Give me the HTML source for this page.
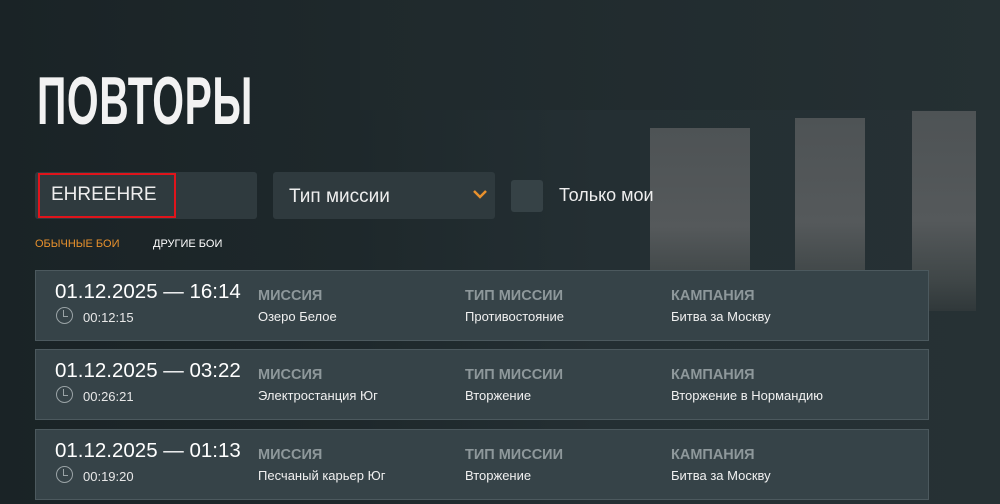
<!DOCTYPE html>
<html><head><meta charset="utf-8"><style>
*{margin:0;padding:0;box-sizing:border-box}
body{width:1000px;height:504px;overflow:hidden;background:#1d2629;font-family:"Liberation Sans",sans-serif;position:relative;color:#fff}
.bg{position:absolute;inset:0;background:linear-gradient(90deg,#1a2326 0%,#1e282b 35%,#242f33 60%,#263134 100%)}
.sky{position:absolute;background:linear-gradient(180deg,#4e5355,#55595b 55%,#3f4647 85%,#30383a);}
.col{position:absolute;background:#222c2f}
h1{position:absolute;left:37px;top:62px;font-size:68px;font-weight:bold;transform:scaleX(0.6);transform-origin:left top;letter-spacing:1px;color:#f2f2f2}
.inp{position:absolute;top:172px;height:47px;background:#2f3a3e;border-radius:3px}
.lbl{position:absolute;font-size:19px;color:#eee}
.card{position:absolute;left:35px;width:894px;height:71px;background:#364348;border:1px solid #4c595e}
.dt{position:absolute;left:19px;top:9px;font-size:20.5px;color:#fff}
.dur{position:absolute;left:47px;top:39px;font-size:13px;color:#e8e8e8}
.clk{position:absolute;left:20px;top:36px;width:17px;height:17px;border:1.5px solid #9aa3a6;border-radius:50%}
.clk:after{content:"";position:absolute;left:6px;top:2px;width:4px;height:6px;border-left:1.5px solid #9aa3a6;border-bottom:1.5px solid #9aa3a6}
.h{position:absolute;top:17px;font-size:14.5px;color:#8e989b;font-weight:bold}
.v{position:absolute;top:38px;font-size:13px;color:#f0f0f0}
</style></head><body>
<div class="bg"></div>
<div class="col" style="left:360px;top:0;width:640px;height:110px;background:linear-gradient(90deg,#1f292c,#253033)"></div>
<div class="sky" style="left:650px;top:128px;width:100px;height:180px"></div>
<div class="sky" style="left:795px;top:118px;width:70px;height:190px"></div>
<div class="sky" style="left:912px;top:111px;width:64px;height:200px"></div>
<h1>ПОВТОРЫ</h1>
<div class="inp" style="left:35px;width:222px"></div>
<div style="position:absolute;left:38px;top:173px;width:138px;height:45px;border:2px solid #e0141b"></div>
<div class="lbl" style="left:51px;top:184px">EHREEHRE</div>
<div class="inp" style="left:273px;width:222px"></div>
<div class="lbl" style="left:289px;top:186px">Тип миссии</div>
<svg style="position:absolute;left:472px;top:189px" width="16" height="10"><path d="M2 2 L8 8 L14 2" stroke="#e8912d" stroke-width="2.5" fill="none"/></svg>
<div style="position:absolute;left:511px;top:180px;width:32px;height:32px;background:#364246;border-radius:3px"></div>
<div class="lbl" style="left:559px;top:185px;font-size:18px">Только мои</div>
<div style="position:absolute;left:35px;top:238px;font-size:11px;color:#e8912d">ОБЫЧНЫЕ БОИ</div>
<div style="position:absolute;left:153px;top:238px;font-size:11px;color:#fff">ДРУГИЕ БОИ</div>

<div class="card" style="top:270px"><div class="dt">01.12.2025 — 16:14</div><div class="clk"></div><div class="dur">00:12:15</div>
<div class="h" style="left:222px">МИССИЯ</div><div class="v" style="left:222px">Озеро Белое</div>
<div class="h" style="left:429px">ТИП МИССИИ</div><div class="v" style="left:429px">Противостояние</div>
<div class="h" style="left:635px">КАМПАНИЯ</div><div class="v" style="left:635px">Битва за Москву</div></div>

<div class="card" style="top:349px"><div class="dt">01.12.2025 — 03:22</div><div class="clk"></div><div class="dur">00:26:21</div>
<div class="h" style="left:222px">МИССИЯ</div><div class="v" style="left:222px">Электростанция Юг</div>
<div class="h" style="left:429px">ТИП МИССИИ</div><div class="v" style="left:429px">Вторжение</div>
<div class="h" style="left:635px">КАМПАНИЯ</div><div class="v" style="left:635px">Вторжение в Нормандию</div></div>

<div class="card" style="top:429px"><div class="dt">01.12.2025 — 01:13</div><div class="clk"></div><div class="dur">00:19:20</div>
<div class="h" style="left:222px">МИССИЯ</div><div class="v" style="left:222px">Песчаный карьер Юг</div>
<div class="h" style="left:429px">ТИП МИССИИ</div><div class="v" style="left:429px">Вторжение</div>
<div class="h" style="left:635px">КАМПАНИЯ</div><div class="v" style="left:635px">Битва за Москву</div></div>
</body></html>
